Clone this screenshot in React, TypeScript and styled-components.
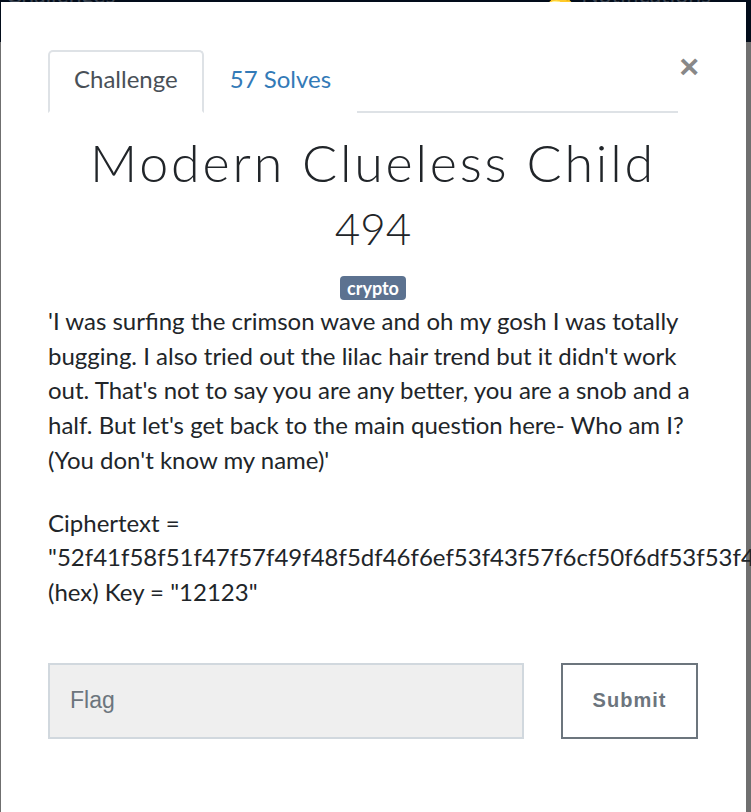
import React from "react";
import styled, { createGlobalStyle } from "styled-components";

const GlobalStyle = createGlobalStyle`
  html, body { margin: 0; padding: 0; }
  body {
    background: #6f6f6f;
    font-family: Lato, "Open Sans", sans-serif;
    color: #212529;
    overflow: hidden;
  }
  #root { min-height: 812px; }
`;

const Page = styled.div`
  position: relative;
  width: 751px;
  height: 812px;
  overflow: hidden;
  background: #6f6f6f;
`;

const Navbar = styled.div`
  height: 42px;
  background: #020c1a;
  display: flex;
  align-items: flex-end;
  justify-content: space-between;
  padding: 0 40px 0 6px;
  overflow: hidden;
`;

const NavLink = styled.span`
  font-family: Lato, sans-serif;
  font-size: 23px;
  line-height: 23px;
  color: #3a4350;
  margin-bottom: 36px;
`;

const Dialog = styled.div`
  position: absolute;
  top: 2px;
  left: 1px;
  width: 745px;
  bottom: -20px;
  background: #ffffff;
  box-sizing: border-box;
  padding: 48px 48px 0 47px;
`;

const Close = styled.button`
  position: absolute;
  top: 47px;
  right: 47px;
  border: 0;
  background: transparent;
  padding: 0;
  font-family: "Liberation Sans", Arial, sans-serif;
  font-size: 34px;
  font-weight: 700;
  line-height: 34px;
  color: #888888;
  cursor: pointer;
`;

const Tabs = styled.nav`
  display: flex;
  width: 630px;
  border-bottom: 2px solid #dee2e6;
`;

const Tab = styled.div<{ $active?: boolean }>`
  padding: 10px 24px 15px 24px;
  font-size: 24px;
  line-height: 34px;
  margin-bottom: -2px;
  border: 2px solid ${(p) => (p.$active ? "#dee2e6" : "transparent")};
  border-bottom-color: ${(p) => (p.$active ? "#ffffff" : "transparent")};
  border-radius: 5px 5px 0 0;
  color: ${(p) => (p.$active ? "#495057" : "#337ab7")};
  background: #fff;
`;

const Header = styled.div`
  display: flex;
  flex-direction: column;
  align-items: center;
  padding-top: 19px;
`;

const Title = styled.h2`
  margin: 0;
  font-family: Lato, sans-serif;
  font-weight: 300;
  font-size: 52px;
  line-height: 60px;
  letter-spacing: 2.8px;
  color: #212529;
`;

const Value = styled.h3`
  margin: 11px 0 0;
  font-family: Lato, sans-serif;
  font-weight: 300;
  font-size: 44px;
  line-height: 50px;
  color: #212529;
`;

const Badge = styled.span`
  margin-top: 23px;
  display: inline-block;
  background: #5c7290;
  color: #ffffff;
  font-weight: 700;
  font-size: 18px;
  line-height: 24px;
  padding: 0 7px;
  border-radius: 4px;
`;

const Description = styled.div`
  margin-top: 4px;
  font-size: 24px;
  line-height: 34.7px;
  color: #212529;
`;

const Para = styled.p`
  margin: 0 0 28px;
`;

const FormRow = styled.form`
  display: flex;
  gap: 37px;
  margin-top: 53px;
  width: 650px;
`;

const FlagInput = styled.input`
  width: 476px;
  height: 76px;
  box-sizing: border-box;
  background: #efefef;
  border: 2px solid #d1d8de;
  padding: 0 20px;
  font-family: "Liberation Sans", Arial, sans-serif;
  font-size: 23px;
  color: #495057;
  outline: none;
  &::placeholder { color: #6c757d; }
`;

const SubmitButton = styled.button`
  width: 137px;
  height: 76px;
  box-sizing: border-box;
  background: #ffffff;
  border: 2px solid #6c757d;
  font-family: "Liberation Sans", Arial, sans-serif;
  font-weight: 700;
  font-size: 20px;
  letter-spacing: 1px;
  color: #6c757d;
`;

export default function App() {
  return (
    <>
      <GlobalStyle />
      <Page>
        <Navbar>
          <NavLink>Challenges</NavLink>
          <NavLink>🔔 Notifications</NavLink>
        </Navbar>
        <Dialog>
          <Close aria-label="Close">×</Close>
          <Tabs>
            <Tab $active>Challenge</Tab>
            <Tab>57 Solves</Tab>
          </Tabs>
          <Header>
            <Title>Modern Clueless Child</Title>
            <Value>494</Value>
            <Badge>crypto</Badge>
          </Header>
          <Description>
            <Para>
              'I was surfing the crimson wave and oh my gosh I was totally bugging. I also tried out the lilac hair trend but it didn't work out. That's not to say you are any better, you are a snob and a half. But let's get back to the main question here- Who am I? (You don't know my name)'
            </Para>
            <Para>
              Ciphertext = "52f41f58f51f47f57f49f48f5df46f6ef53f43f57f6cf50f6df53f53f40f6cf51f6ff41f40f6af4df5bf" (hex) Key = "12123"
            </Para>
          </Description>
          <FormRow onSubmit={(e) => e.preventDefault()}>
            <FlagInput placeholder="Flag" />
            <SubmitButton type="submit">Submit</SubmitButton>
          </FormRow>
        </Dialog>
      </Page>
    </>
  );
}
